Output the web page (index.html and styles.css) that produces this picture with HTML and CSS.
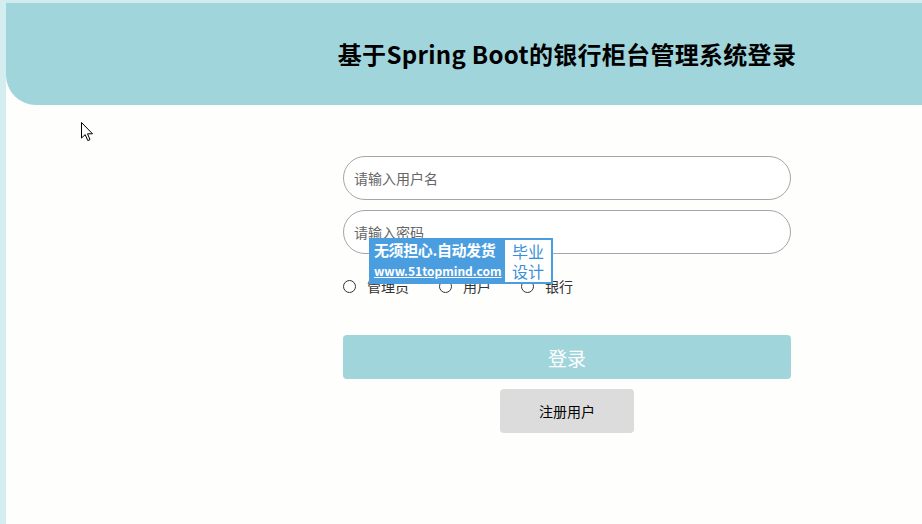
FILE: index.html
```html
<!DOCTYPE html>
<html lang="zh-CN">
<head>
<meta charset="utf-8">
<title>基于Spring Boot的银行柜台管理系统登录</title>
<link rel="stylesheet" href="styles.css">
</head>
<body>
<div class="page">
  <div class="side"></div>
  <div class="main">
    <header class="header">
      <div class="column title-col">
        <h1 class="title">基于Spring Boot的银行柜台管理系统登录</h1>
      </div>
    </header>
    <form class="column form">
      <input class="field" type="text" placeholder="请输入用户名">
      <input class="field" type="password" placeholder="请输入密码">
      <div class="roles">
        <label class="role"><span class="radio"></span>管理员</label>
        <label class="role"><span class="radio"></span>用户</label>
        <label class="role"><span class="radio"></span>银行</label>
      </div>
      <button class="login" type="button">登录</button>
      <button class="register" type="button">注册用户</button>
    </form>
  </div>
</div>
<div class="badge">
  <div class="badge-left">
    <span class="badge-top">无须担心.自动发货</span>
    <span class="badge-url">www.51topmind.com</span>
  </div>
  <div class="badge-right">毕业<br>设计</div>
</div>
<svg class="cursor" width="13" height="20" viewBox="0 0 13 20">
  <path d="M0.5 0.5 L0.5 16 L4.2 12.6 L6.8 18.6 L9 17.6 L6.5 11.8 L11.5 11.8 Z" fill="#fff" stroke="#000" stroke-width="1" stroke-linejoin="miter"/>
</svg>
</body>
</html>
```
FILE: styles.css
```css
* { box-sizing: border-box; }
html, body { margin: 0; padding: 0; }
body {
  width: 922px;
  height: 524px;
  overflow: hidden;
  background: #fefefc;
  font-family: "Noto Sans CJK SC", "Noto Sans", sans-serif;
}
.page {
  display: flex;
  height: 524px;
}
.side {
  width: 6px;
  flex: none;
  background: #d4edee;
}
.main {
  flex: 1;
  border-top: 3px solid #d2ebee;
}
.header {
  height: 102px;
  background: #a0d5dc;
  border-bottom-left-radius: 30px;
  display: flex;
  align-items: center;
}
.column {
  margin-left: 337px;
  width: 448px;
}
.title-col {
  display: flex;
  justify-content: center;
}
.title {
  margin: 0;
  white-space: nowrap;
  font-size: 24px;
  font-weight: 700;
  color: #000;
  line-height: 30px;
  letter-spacing: 0.3px;
  position: relative;
  top: 0;
}
.form {
  display: flex;
  flex-direction: column;
  align-items: center;
  padding-top: 51px;
}
.field {
  width: 448px;
  height: 44px;
  border: 1px solid #a6a6a6;
  border-radius: 22px;
  padding: 0 10px;
  font-family: inherit;
  font-size: 14px;
  background: #fff;
  margin-bottom: 10px;
  outline: none;
}
.field::placeholder { color: #666; }
.roles {
  align-self: stretch;
  display: flex;
  align-items: center;
  margin-top: 12px;
  height: 20px;
  font-size: 14px;
  color: #333;
}
.role {
  display: flex;
  align-items: center;
  margin-right: 30px;
}
.radio {
  width: 13px;
  height: 13px;
  border: 1px solid #333;
  border-radius: 50%;
  background: #fff;
  margin-right: 11px;
}
.login {
  margin-top: 39px;
  width: 448px;
  height: 44px;
  border: none;
  border-radius: 4px;
  background: #a0d5dc;
  color: #fff;
  font-family: inherit;
  font-size: 19px;
}
.register {
  margin-top: 10px;
  width: 134px;
  height: 44px;
  border: none;
  border-radius: 4px;
  background: #dcdcdc;
  color: #000;
  font-family: inherit;
  font-size: 14px;
}
.badge {
  position: absolute;
  left: 369px;
  top: 238px;
  width: 184px;
  height: 46px;
  background: #4a9ee0;
  display: flex;
  padding: 2px;
}
.badge-left {
  flex: 1;
  min-width: 0;
  display: flex;
  flex-direction: column;
  color: #fff;
  padding-left: 3px;
  white-space: nowrap;
}
.badge-top {
  font-size: 15px;
  font-weight: 700;
  line-height: 20px;
  letter-spacing: -0.4px;
}
.badge-url {
  font-size: 12px;
  font-weight: 700;
  line-height: 21px;
  text-decoration: underline;
  letter-spacing: 0;
}
.badge-right {
  flex: none;
  width: 46px;
  background: #fff;
  color: #3a8fd8;
  font-size: 16px;
  line-height: 20px;
  text-align: center;
  padding-top: 1px;
}
.cursor {
  position: absolute;
  left: 81px;
  top: 122px;
}
```
